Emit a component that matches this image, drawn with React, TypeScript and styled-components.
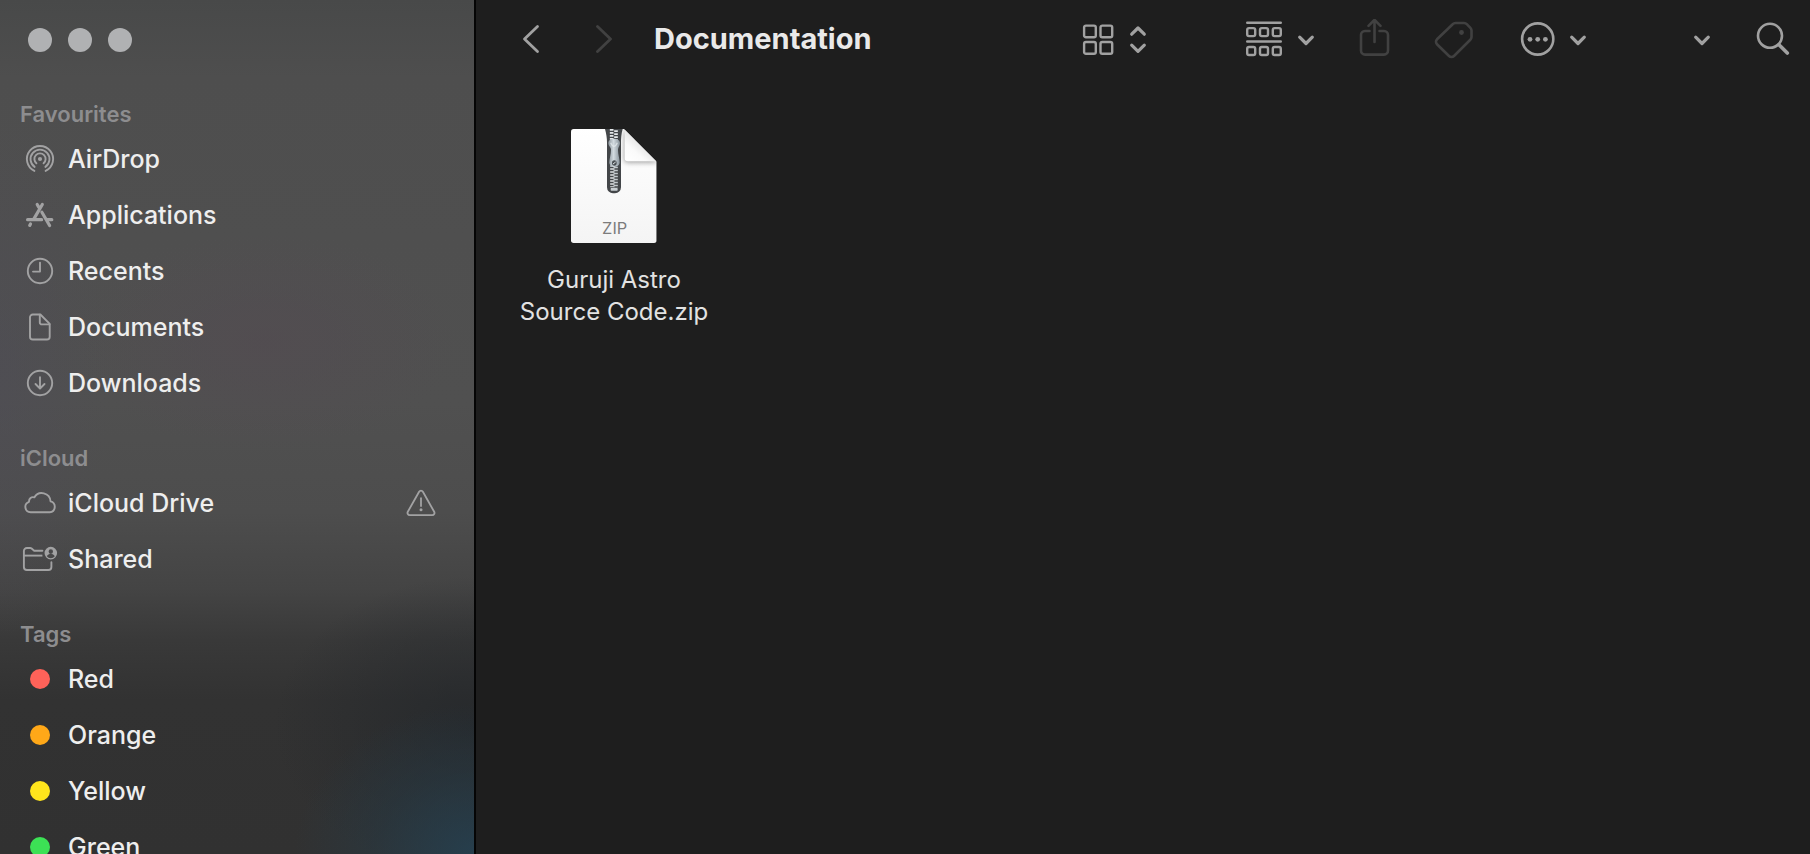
import React from "react";
import styled, { createGlobalStyle } from "styled-components";

const GlobalStyle = createGlobalStyle`
  * { box-sizing: border-box; }
  html, body { margin: 0; padding: 0; }
  body {
    background: #1e1e1e;
    color: #e6e6e6;
    font-family: Inter, "Liberation Sans", sans-serif;
    overflow: hidden;
  }
`;

const Window = styled.div`
  display: grid;
  grid-template-columns: 476px minmax(0, 1fr);
  height: 100vh;
  overflow: hidden;
`;

const Sidebar = styled.aside`
  min-height: 0;
  overflow: hidden;
  border-right: 2px solid #050505;
  background:
    radial-gradient(ellipse 180px 150px at 100% 100%, rgba(36, 66, 84, 0.8), rgba(36, 60, 74, 0.4) 55%, rgba(36, 58, 70, 0) 100%),
    radial-gradient(ellipse 200px 150px at 100% 85%, rgba(34, 38, 42, 0.7), rgba(34, 38, 42, 0) 100%),
    radial-gradient(ellipse 190px 110px at 56% 40%, rgba(84, 74, 82, 0.5), rgba(84, 74, 82, 0) 100%),
    radial-gradient(ellipse 110px 260px at 0% 44%, rgba(78, 76, 86, 0.5), rgba(78, 76, 86, 0) 100%),
    linear-gradient(
      #484949 0%,
      #4e4e4e 9%,
      #505050 47%,
      #4d4d4d 60%,
      #444444 69%,
      #393939 75%,
      #323232 82%,
      #313131 100%
    );
`;

const WindowControls = styled.div`
  display: flex;
  gap: 16px;
  height: 97px;
  padding: 28px 28px 0;
`;

const ControlDot = styled.button`
  width: 24px;
  height: 24px;
  padding: 0;
  border: 0;
  border-radius: 50%;
  background: #b0b1b3;
`;

const Section = styled.section`
  & + & { padding-top: 30px; }
`;

const SectionTitle = styled.h2`
  margin: 0;
  padding-left: 20px;
  color: #8d8d8f;
  font-size: 22px;
  font-weight: 600;
  line-height: 34px;
`;

const List = styled.ul`
  margin: 0;
  padding: 0;
  list-style: none;
`;

const Row = styled.a`
  display: flex;
  align-items: center;
  gap: 10px;
  height: 56px;
  padding: 0 37px 0 22px;
  color: #eeeeee;
  font-size: 25px;
  font-weight: 500;
  line-height: 32px;
  text-decoration: none;

  svg { flex: none; color: #a2a2a3; }
`;

const RowLabel = styled.span`
  flex: 1;
`;

const TagSlot = styled.span`
  display: flex;
  justify-content: center;
  width: 36px;
`;

const TagDot = styled.span<{ $color: string }>`
  width: 20px;
  height: 20px;
  border-radius: 50%;
  background: ${(p) => p.$color};
`;

const Main = styled.main`
  display: flex;
  flex-direction: column;
  min-width: 0;
  background: #1e1e1e;
`;

const Toolbar = styled.header`
  display: flex;
  align-items: center;
  gap: 42px;
  height: 78px;
  padding: 0 20px 0 44px;
`;

const ToolButton = styled.button<{ $gap?: number; $after?: number }>`
  display: flex;
  flex: none;
  align-items: center;
  gap: ${(p) => p.$gap ?? 0}px;
  margin-right: ${(p) => p.$after ?? 0}px;
  padding: 0;
  border: 0;
  background: none;
  color: #a1a1a1;

  &:disabled { color: #414141; }
`;

const FolderTitle = styled.h1`
  flex: 1;
  margin: 0;
  color: #e9e9e9;
  font-size: 29px;
  font-weight: 700;
  line-height: 40px;
  white-space: nowrap;
`;

const FileGrid = styled.div`
  display: grid;
  grid-template-columns: repeat(auto-fill, 200px);
  gap: 40px;
  padding: 50px 38px;
`;

const FileItem = styled.figure`
  display: flex;
  flex-direction: column;
  align-items: center;
  gap: 20px;
  margin: 0;
`;

const FileName = styled.figcaption`
  color: #e2e2e2;
  font-size: 24px;
  font-weight: 400;
  line-height: 32px;
  text-align: center;
`;

const SideIcon = ({ children }: { children: React.ReactNode }) => (
  <svg
    width="36"
    height="36"
    viewBox="-18 -18 36 36"
    fill="none"
    stroke="currentColor"
    strokeWidth="1.9"
    strokeLinecap="round"
    strokeLinejoin="round"
    aria-hidden="true"
  >
    {children}
  </svg>
);

const AirDropIcon = () => (
  <SideIcon>
    <path d="M-5.6 11.9A13.1 13.1 0 1 1 5.6 11.9" />
    <path d="M-5.4 7.9A9.5 9.5 0 1 1 5.4 7.9" />
    <path d="M-3.6 4.3A5.6 5.6 0 1 1 3.6 4.3" />
    <circle r="2.1" fill="currentColor" stroke="none" />
  </SideIcon>
);

const ApplicationsIcon = () => (
  <SideIcon>
    <g strokeWidth="3.2">
      <path d="M2.3-10.5L-6.4 4.4M-2.8-10.5l1.4 2.4M1.9-2.8L9.6 10.5" />
      <path d="M-12.4 4.7H1.6M7.4 4.7h4.4M-9.5 8.9l-.8 1.5" />
    </g>
  </SideIcon>
);

const RecentsIcon = () => (
  <SideIcon>
    <circle r="12.2" />
    <path d="M0-8.4V.6H-7" />
  </SideIcon>
);

const DocumentsIcon = () => (
  <SideIcon>
    <path d="M-7.2-12.5H.4L9.7-3.2V9.7a2.8 2.8 0 0 1-2.8 2.8h-14.1a2.8 2.8 0 0 1-2.8-2.8V-9.7a2.8 2.8 0 0 1 2.8-2.8Z" />
    <path d="M-.2-12.2v7.6a2 2 0 0 0 2 2h7.6" />
  </SideIcon>
);

const DownloadsIcon = () => (
  <SideIcon>
    <circle r="12.2" />
    <path d="M0-5.8v11M-4.5 1L0 5.5 4.5 1" />
  </SideIcon>
);

const CloudIcon = () => (
  <SideIcon>
    <path d="M-9.4 9.3a5.4 5.4 0 0 1-1.6-10.5C-11.2-4.4-8.500-6.600-5.700-5.600A8.700 8.700 0 0 1 10.500-1.700 5.600 5.600 0 0 1 9.800 9.300Z" />
  </SideIcon>
);

const SharedIcon = () => (
  <SideIcon>
    <path d="M2.4-8.3H-5.8L-8.4-10.5a2.5 2.5 0 0 0-1.5-.5h-3.2a3 3 0 0 0-3 3V8a3 3 0 0 0 3 3H8.4a3 3 0 0 0 3-3V3.200" />
    <path d="M-16-3.400H2.400" strokeLinecap="butt" />
    <path
      d="M10.800-12.200a6.300 6.300 0 1 0 0 12.600 6.300 6.300 0 0 0 0-12.600Zm0 2.400a2.200 2.400 0 1 1 0 4.800 2.200 2.400 0 0 1 0-4.800Zm-4 7.100c.8-1.600 2.300-2.200 4-2.200s3.200.6 4 2.200a5.200 5.200 0 0 1-8 0Z"
      fill="currentColor"
      fillRule="evenodd"
      stroke="none"
    />
  </SideIcon>
);

const WarningIcon = () => (
  <svg
    width="32"
    height="30"
    viewBox="-16 -15 32 30"
    fill="none"
    stroke="currentColor"
    strokeWidth="1.8"
    strokeLinecap="round"
    strokeLinejoin="round"
    role="img"
    aria-label="Warning"
  >
    <path d="M-1.900-11.200a2.200 2.200 0 0 1 3.800 0L13.200 8.800a2.200 2.200 0 0 1-1.900 3.300H-11.300a2.200 2.200 0 0 1-1.900-3.300Z" />
    <path d="M0-4.800V3" />
    <circle cy="6.800" r="1.500" fill="currentColor" stroke="none" />
  </svg>
);

type ToolIconProps = { w: number; h: number; sw?: number; children: React.ReactNode };

const ToolIcon = ({ w, h, sw = 2.6, children }: ToolIconProps) => (
  <svg
    width={w}
    height={h}
    viewBox={`0 0 ${w} ${h}`}
    fill="none"
    stroke="currentColor"
    strokeWidth={sw}
    strokeLinecap="round"
    strokeLinejoin="round"
    aria-hidden="true"
  >
    {children}
  </svg>
);

const ChevronDown = () => (
  <ToolIcon w={20} h={20} sw={3.2}>
    <path d="M3.700 8.200L10 14.500l6.300-6.300" />
  </ToolIcon>
);

const GridIcon = () => (
  <ToolIcon w={32} h={32} sw={2.4}>
    {[2.6, 19].map((y) =>
      [2.1, 18.5].map((x) => (
        <rect key={`${x}-${y}`} x={x} y={y} width="11.700" height="11.700" rx="1.800" />
      ))
    )}
  </ToolIcon>
);

const GroupIcon = () => (
  <ToolIcon w={36} h={38} sw={2.4}>
    <path d="M1.200 2.800h33.600M1.200 21.500h33.600" />
    {[8.1, 27].map((y) =>
      [1.2, 14, 26.8].map((x) => (
        <rect key={`${x}-${y}`} x={x} y={y} width="8" height="8" rx="1.800" />
      ))
    )}
  </ToolIcon>
);

const ZipIcon = () => (
  <svg width="88" height="116" viewBox="210 54 264 348" role="img" aria-label="Zip archive">
    <defs>
      <linearGradient id="paper" x1="0" y1="0" x2="0" y2="1">
        <stop offset="0" stopColor="#ffffff" />
        <stop offset="1" stopColor="#f4f4f4" />
      </linearGradient>
      <linearGradient id="fold" x1="0.550" y1="0.450" x2="0.050" y2="1">
        <stop offset="0" stopColor="#e0e0e0" />
        <stop offset="0.500" stopColor="#fafafa" />
        <stop offset="1" stopColor="#ffffff" />
      </linearGradient>
      <linearGradient id="metal" x1="0" y1="0" x2="1" y2="0">
        <stop offset="0" stopColor="#8e989f" />
        <stop offset="0.450" stopColor="#d3dbe0" />
        <stop offset="1" stopColor="#87929a" />
      </linearGradient>
      <clipPath id="sheet">
        <path d="M221 57H372L470 155V391a8 8 0 0 1-8 8H221a8 8 0 0 1-8-8V65a8 8 0 0 1 8-8Z" />
      </clipPath>
      <filter id="soft" x="-30%" y="-30%" width="160%" height="160%">
        <feGaussianBlur stdDeviation="8" />
      </filter>
    </defs>
    <g clipPath="url(#sheet)">
      <rect x="210" y="54" width="264" height="348" fill="url(#paper)" />
      <path d="M372 57V146a12 12 0 0 0 12 12H474Z" fill="#000" opacity="0.350" filter="url(#soft)" />
      <path d="M374 50V144a10 10 0 0 0 10 10H480Z" fill="url(#fold)" />
      <path d="M315 57H368C364 72 363 84 363 98V232a18 18 0 0 1-18 18h-6a18 18 0 0 1-18-18V98C321 84 319 72 315 57Z" fill="#434649" />
      <path d="M335 57V90" stroke="#e4e7e9" strokeWidth="11" strokeDasharray="5 4" />
      <path d="M348 61V90" stroke="#e4e7e9" strokeWidth="11" strokeDasharray="5 4" />
      <path d="M337 166V232" stroke="#dfe3e5" strokeWidth="13" strokeDasharray="4 5" />
      <path d="M347 170.500V234" stroke="#c3c9cd" strokeWidth="13" strokeDasharray="4 5" />
      <rect x="332" y="234" width="21" height="8" rx="2" fill="#c8ced2" />
      <path d="M325 99c0-8 7-13 17-13s18 5 18 13c0 9-6 12-6 20 0 14 5 28 5 38 0 8-7 14-16 14s-15-6-15-14c0-10 5-24 5-38 0-8-8-11-8-20Z" fill="url(#metal)" />
      <path d="M332 98c4 9 6 11 10 11s6-2 10-11" stroke="#e8eef1" strokeWidth="4" fill="none" opacity="0.700" />
      <ellipse cx="343" cy="159" rx="7" ry="8" fill="#4a4f53" />
      <path d="M339 162l8-6" stroke="#dfe5e8" strokeWidth="3" />
    </g>
    <text x="344" y="372" textAnchor="middle" fontFamily="Inter, sans-serif" fontSize="49" fontWeight="400" fill="#7c7c7c">
      ZIP
    </text>
  </svg>
);

const favourites = [
  { label: "AirDrop", Icon: AirDropIcon },
  { label: "Applications", Icon: ApplicationsIcon },
  { label: "Recents", Icon: RecentsIcon },
  { label: "Documents", Icon: DocumentsIcon },
  { label: "Downloads", Icon: DownloadsIcon },
];

const cloud = [
  { label: "iCloud Drive", Icon: CloudIcon, warning: true },
  { label: "Shared", Icon: SharedIcon, warning: false },
];

const tags = [
  { label: "Red", color: "#ff6259" },
  { label: "Orange", color: "#ffa818" },
  { label: "Yellow", color: "#ffe51c" },
  { label: "Green", color: "#3ce155" },
];

export default function App() {
  return (
    <>
      <GlobalStyle />
      <Window>
        <Sidebar>
          <WindowControls>
            <ControlDot aria-label="Close" />
            <ControlDot aria-label="Minimise" />
            <ControlDot aria-label="Zoom" />
          </WindowControls>
          <nav>
            <Section>
              <SectionTitle>Favourites</SectionTitle>
              <List>
                {favourites.map(({ label, Icon }) => (
                  <li key={label}>
                    <Row href="#">
                      <Icon />
                      <RowLabel>{label}</RowLabel>
                    </Row>
                  </li>
                ))}
              </List>
            </Section>
            <Section>
              <SectionTitle>iCloud</SectionTitle>
              <List>
                {cloud.map(({ label, Icon, warning }) => (
                  <li key={label}>
                    <Row href="#">
                      <Icon />
                      <RowLabel>{label}</RowLabel>
                      {warning && <WarningIcon />}
                    </Row>
                  </li>
                ))}
              </List>
            </Section>
            <Section>
              <SectionTitle>Tags</SectionTitle>
              <List>
                {tags.map(({ label, color }) => (
                  <li key={label}>
                    <Row href="#">
                      <TagSlot>
                        <TagDot $color={color} />
                      </TagSlot>
                      <RowLabel>{label}</RowLabel>
                    </Row>
                  </li>
                ))}
              </List>
            </Section>
          </nav>
        </Sidebar>
        <Main>
          <Toolbar>
            <ToolButton aria-label="Back">
              <ToolIcon w={30} h={32} sw={2.8}>
                <path d="M17.500 3.500L4.500 16l13 12.500" />
              </ToolIcon>
            </ToolButton>
            <ToolButton aria-label="Forward" disabled>
              <ToolIcon w={20} h={32} sw={2.8}>
                <path d="M5.500 3.500l13 12.500-13 12.500" />
              </ToolIcon>
            </ToolButton>
            <FolderTitle>Documentation</FolderTitle>
            <ToolButton aria-label="View as icons" $gap={14} $after={56}>
              <GridIcon />
              <ToolIcon w={20} h={32} sw={3.2}>
                <path d="M3.700 11.200L10 5l6.300 6.200M3.700 22.200L10 28.400l6.300-6.200" />
              </ToolIcon>
            </ToolButton>
            <ToolButton aria-label="Group items" $gap={14}>
              <GroupIcon />
              <ChevronDown />
            </ToolButton>
            <ToolButton aria-label="Share" disabled>
              <ToolIcon w={34} h={40}>
                <path d="M11.500 12H7a4 4 0 0 0-4 4V31.600a4 4 0 0 0 4 4H26a4 4 0 0 0 4-4V16a4 4 0 0 0-4-4H21.500" />
                <path d="M16.500 23V1.500M10.500 6.800l6-6 6 6" />
              </ToolIcon>
            </ToolButton>
            <ToolButton aria-label="Edit tags" disabled>
              <ToolIcon w={44} h={40}>
                <path d="M21.500 4h8.500a4 4 0 0 1 2.800 1.200l3.600 3.600A4 4 0 0 1 37.500 11.600V18a4 4 0 0 1-1.200 2.800L20 37a3.600 3.600 0 0 1-5 0L3 25.300a3.600 3.600 0 0 1 0-5L18.700 5.200A4 4 0 0 1 21.500 4Z" />
                <circle cx="27.500" cy="13.500" r="2.400" fill="currentColor" stroke="none" />
              </ToolIcon>
            </ToolButton>
            <ToolButton aria-label="More actions" $gap={12} $after={62}>
              <ToolIcon w={36} h={36}>
                <circle cx="17.700" cy="18" r="15.600" />
                {[10, 17.7, 25.4].map((x) => (
                  <circle key={x} cx={x} cy="18.300" r="2.400" fill="currentColor" stroke="none" />
                ))}
              </ToolIcon>
              <ChevronDown />
            </ToolButton>
            <ToolButton aria-label="More toolbar items">
              <ChevronDown />
            </ToolButton>
            <ToolButton aria-label="Search">
              <ToolIcon w={36} h={36}>
                <circle cx="16" cy="14.800" r="12" />
                <path d="M25 23.800l8.300 8.300" strokeWidth="3.600" />
              </ToolIcon>
            </ToolButton>
          </Toolbar>
          <FileGrid>
            <FileItem>
              <ZipIcon />
              <FileName>
                Guruji Astro
                <br />
                Source Code.zip
              </FileName>
            </FileItem>
          </FileGrid>
        </Main>
      </Window>
    </>
  );
}
